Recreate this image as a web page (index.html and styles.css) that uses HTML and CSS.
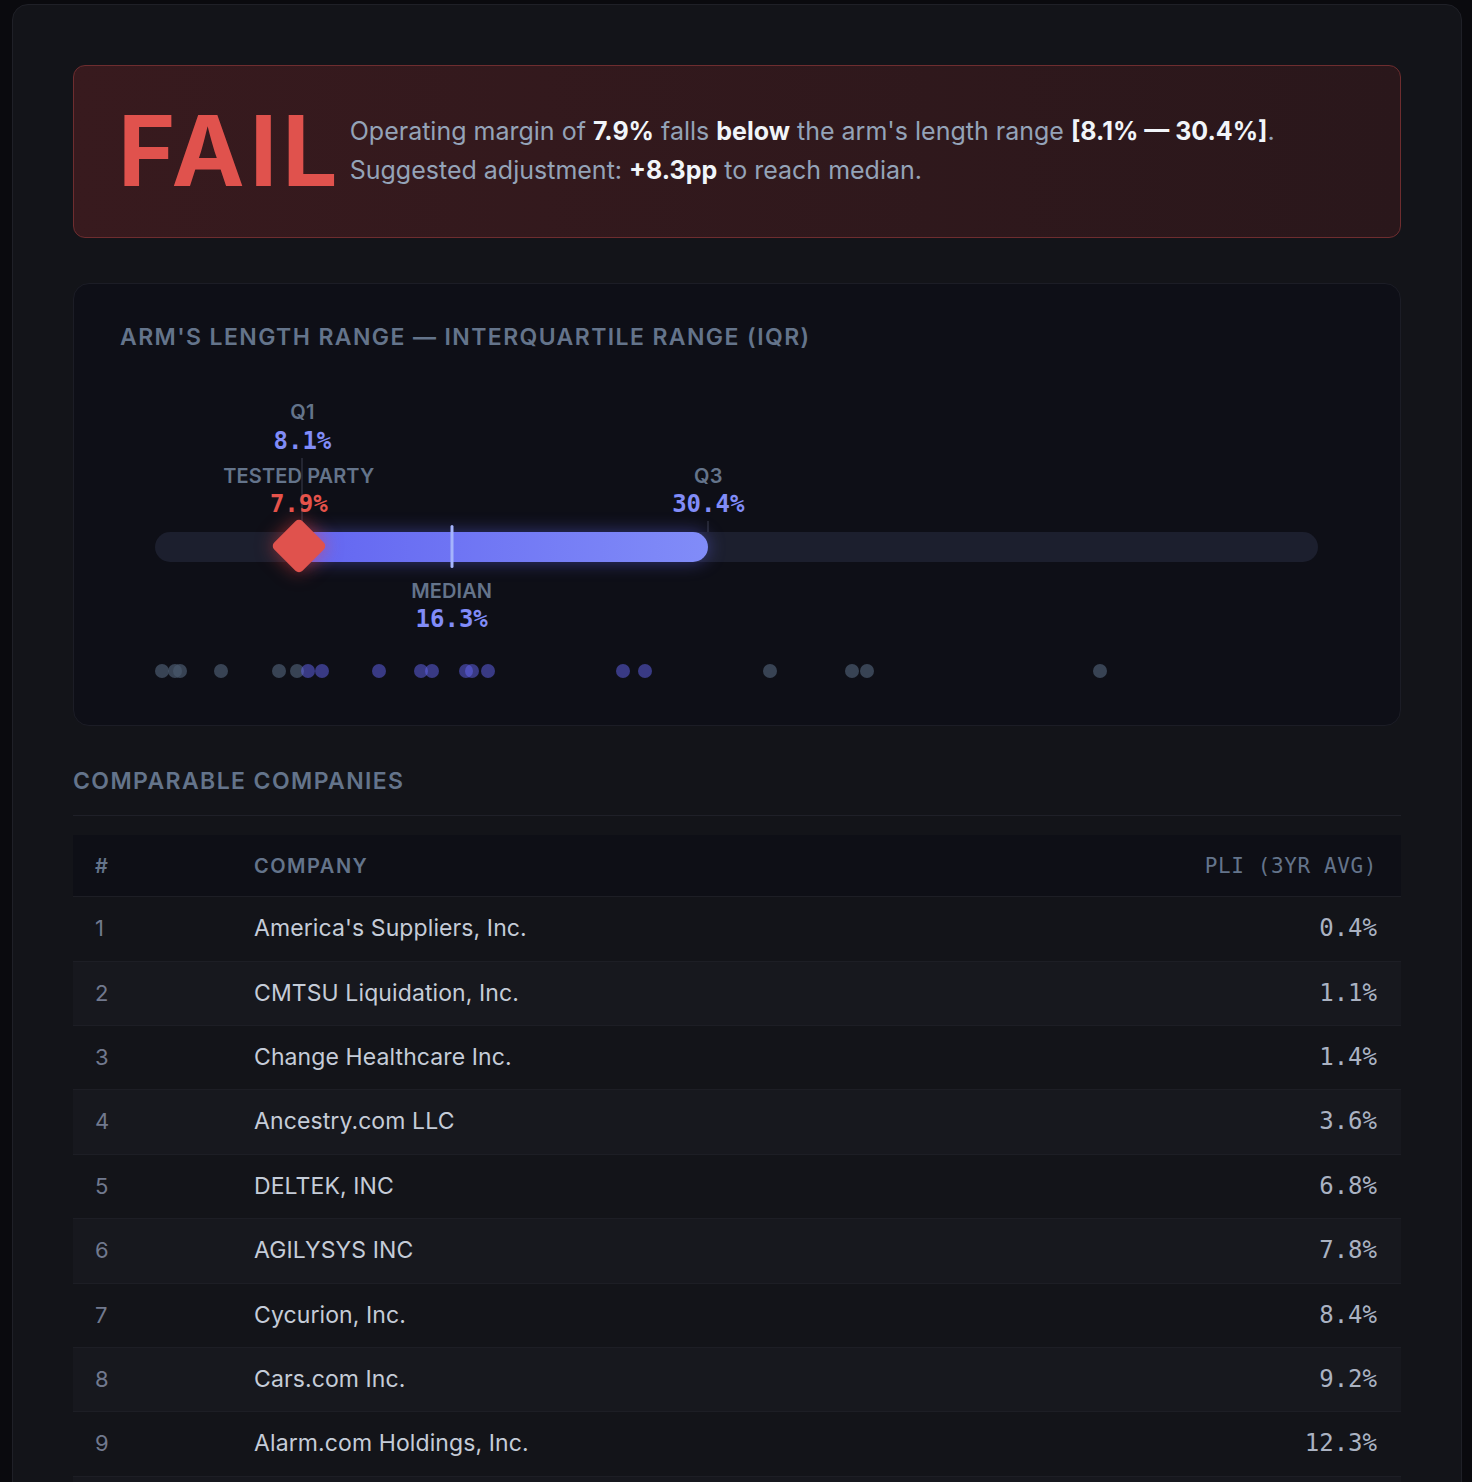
FILE: index.html
```html
<!DOCTYPE html>
<html lang="en">
<head>
<meta charset="utf-8">
<title>Arm's Length Test</title>
<link rel="stylesheet" href="styles.css">
</head>
<body>
<div class="page">
  <section class="verdict">
    <div class="verdict-word">FAIL</div>
    <p class="verdict-text">Operating margin of <strong>7.9%</strong> falls <strong>below</strong> the arm's length range <strong>[8.1% — 30.4%]</strong>.<br>Suggested adjustment: <strong>+8.3pp</strong> to reach median.</p>
  </section>

  <section class="range-card">
    <h2 class="card-title">ARM'S LENGTH RANGE — INTERQUARTILE RANGE (IQR)</h2>
    <div class="chart">
      <div class="chart-canvas">
        <div class="guide guide-q1" style="left:12.676%"></div>
        <div class="guide guide-q3" style="left:47.574%"></div>
        <div class="marker-label label-q1" style="left:12.676%">Q1</div>
        <div class="marker-value value-q1" style="left:12.676%">8.1%</div>
        <div class="marker-label label-top" style="left:12.363%">TESTED PARTY</div>
        <div class="marker-value value-tested" style="left:12.363%">7.9%</div>
        <div class="marker-label label-top" style="left:47.574%">Q3</div>
        <div class="marker-value value-q3" style="left:47.574%">30.4%</div>

        <div class="track"></div>
        <div class="iqr-fill" style="left:12.676%;width:34.898%"></div>
        <div class="median-line" style="left:25.509%"></div>
        <div class="diamond" style="left:12.363%"></div>

        <div class="marker-label label-median" style="left:25.509%">MEDIAN</div>
        <div class="marker-value value-median" style="left:25.509%">16.3%</div>

        <span class="dot" style="left:0.626%"></span>
        <span class="dot" style="left:1.721%"></span>
        <span class="dot" style="left:2.191%"></span>
        <span class="dot" style="left:5.634%"></span>
        <span class="dot" style="left:10.642%"></span>
        <span class="dot" style="left:12.207%"></span>
        <span class="dot dot-in" style="left:13.146%"></span>
        <span class="dot dot-in" style="left:14.397%"></span>
        <span class="dot dot-in" style="left:19.249%"></span>
        <span class="dot dot-in" style="left:22.848%"></span>
        <span class="dot dot-in" style="left:23.787%"></span>
        <span class="dot dot-in" style="left:26.761%"></span>
        <span class="dot dot-in" style="left:27.230%"></span>
        <span class="dot dot-in" style="left:28.638%"></span>
        <span class="dot dot-in" style="left:40.219%"></span>
        <span class="dot dot-in" style="left:42.097%"></span>
        <span class="dot" style="left:52.895%"></span>
        <span class="dot" style="left:59.937%"></span>
        <span class="dot" style="left:61.189%"></span>
        <span class="dot" style="left:81.221%"></span>
      </div>
    </div>
  </section>

  <section class="comparables">
    <h2 class="section-title">COMPARABLE COMPANIES</h2>
    <table class="comp-table">
      <thead>
        <tr>
          <th class="col-num">#</th>
          <th class="col-name">COMPANY</th>
          <th class="col-pli">PLI (3YR AVG)</th>
        </tr>
      </thead>
      <tbody>
        <tr><td class="col-num">1</td><td class="col-name">America's Suppliers, Inc.</td><td class="col-pli">0.4%</td></tr>
        <tr><td class="col-num">2</td><td class="col-name">CMTSU Liquidation, Inc.</td><td class="col-pli">1.1%</td></tr>
        <tr><td class="col-num">3</td><td class="col-name">Change Healthcare Inc.</td><td class="col-pli">1.4%</td></tr>
        <tr><td class="col-num">4</td><td class="col-name">Ancestry.com LLC</td><td class="col-pli">3.6%</td></tr>
        <tr><td class="col-num">5</td><td class="col-name">DELTEK, INC</td><td class="col-pli">6.8%</td></tr>
        <tr><td class="col-num">6</td><td class="col-name">AGILYSYS INC</td><td class="col-pli">7.8%</td></tr>
        <tr><td class="col-num">7</td><td class="col-name">Cycurion, Inc.</td><td class="col-pli">8.4%</td></tr>
        <tr><td class="col-num">8</td><td class="col-name">Cars.com Inc.</td><td class="col-pli">9.2%</td></tr>
        <tr><td class="col-num">9</td><td class="col-name">Alarm.com Holdings, Inc.</td><td class="col-pli">12.3%</td></tr>
        <tr><td class="col-num">10</td><td class="col-name">PDF Solutions, Inc.</td><td class="col-pli">14.6%</td></tr>
        <tr><td class="col-num">11</td><td class="col-name">Model N, Inc.</td><td class="col-pli">15.2%</td></tr>
        <tr><td class="col-num">12</td><td class="col-name">American Software, Inc.</td><td class="col-pli">17.1%</td></tr>
        <tr><td class="col-num">13</td><td class="col-name">QAD Inc.</td><td class="col-pli">17.4%</td></tr>
        <tr><td class="col-num">14</td><td class="col-name">Upland Software, Inc.</td><td class="col-pli">18.3%</td></tr>
        <tr><td class="col-num">15</td><td class="col-name">SPS Commerce, Inc.</td><td class="col-pli">25.7%</td></tr>
        <tr><td class="col-num">16</td><td class="col-name">Qualys, Inc.</td><td class="col-pli">26.9%</td></tr>
        <tr><td class="col-num">17</td><td class="col-name">Tyler Technologies, Inc.</td><td class="col-pli">33.8%</td></tr>
        <tr><td class="col-num">18</td><td class="col-name">Paycom Software, Inc.</td><td class="col-pli">38.3%</td></tr>
        <tr><td class="col-num">19</td><td class="col-name">Veeva Systems Inc.</td><td class="col-pli">39.1%</td></tr>
        <tr><td class="col-num">20</td><td class="col-name">Fair Isaac Corporation</td><td class="col-pli">51.9%</td></tr>
      </tbody>
    </table>
  </section>
</div>
</body>
</html>
```

FILE: styles.css
```css
* {
  box-sizing: border-box;
}

html,
body {
  margin: 0;
}

body {
  background: #0a0a0e;
  font-family: Inter, "Noto Sans", sans-serif;
  color: #c5ccd8;
}

.page {
  margin: 4px 10px 0 12px;
  padding: 60px;
  background: #131419;
  border: 1px solid #1f2027;
  border-radius: 16px;
}

/* Verdict banner */
.verdict {
  display: flex;
  align-items: center;
  gap: 7px;
  padding: 36px 44px 37px;
  border: 1px solid #6e2d2f;
  border-radius: 12px;
  background: linear-gradient(90deg, #381a1e 0%, #2a171b 100%);
}

.verdict-word {
  font-size: 98px;
  line-height: 1;
  font-weight: 700;
  color: #e0524d;
  letter-spacing: 5px;
}

.verdict-text {
  margin: 0;
  font-size: 25px;
  line-height: 39px;
  color: #94a3b8;
}

.verdict-text strong {
  color: #f1f5f9;
  font-weight: 700;
}

/* Range card */
.range-card {
  margin-top: 45px;
  padding: 40px 46px;
  background: #0e0f17;
  border: 1px solid #1c1d26;
  border-radius: 16px;
}

.card-title,
.section-title {
  margin: 0;
  font-size: 23px;
  line-height: 27.6px;
  font-weight: 600;
  letter-spacing: 1.4px;
  color: #64748b;
}

.chart {
  padding: 0 36px 0 35px;
}

.chart-canvas {
  position: relative;
  height: 333px;
}

.marker-label {
  position: absolute;
  transform: translateX(-50%);
  font-size: 20px;
  line-height: 1;
  font-weight: 600;
  letter-spacing: 0.1px;
  color: #64748b;
  white-space: nowrap;
}

.marker-value {
  position: absolute;
  transform: translateX(-50%);
  font-family: "DejaVu Sans Mono", "Liberation Mono", monospace;
  font-size: 24px;
  line-height: 1;
  font-weight: 700;
  color: #818cf8;
  white-space: nowrap;
}

.label-q1 { top: 50px; }
.value-q1 { top: 77px; }
.label-top { top: 114px; }
.value-tested { top: 140px; color: #e5534b; }
.value-q3 { top: 140px; }
.label-median { top: 229px; }
.value-median { top: 255px; }

.guide {
  position: absolute;
  width: 1px;
  background: #3a3e4e;
  transform: translateX(-50%);
}

.guide-q1 {
  top: 106px;
  height: 74px;
}

.guide-q3 {
  top: 169px;
  height: 11px;
}

.track {
  position: absolute;
  left: 0;
  right: 0;
  top: 180px;
  height: 30px;
  border-radius: 15px;
  background: #1c1f2e;
}

.iqr-fill {
  position: absolute;
  top: 180px;
  height: 30px;
  border-radius: 0 15px 15px 0;
  background: linear-gradient(90deg, #6366f1 0%, #818cf8 100%);
  box-shadow: 0 0 18px rgba(99, 102, 241, 0.45);
}

.median-line {
  position: absolute;
  top: 173px;
  width: 3px;
  height: 43px;
  border-radius: 2px;
  background: #a5b4fc;
  transform: translateX(-50%);
}

.diamond {
  position: absolute;
  top: 174px;
  width: 40px;
  height: 40px;
  margin-left: -20px;
  border-radius: 5px;
  background: #e0524d;
  transform: rotate(45deg);
  box-shadow: 0 0 18px rgba(239, 68, 68, 0.55);
}

.dot {
  position: absolute;
  top: 312px;
  width: 14px;
  height: 14px;
  margin-left: -7px;
  border-radius: 50%;
  background: rgba(71, 85, 105, 0.75);
}

.dot-in {
  background: rgba(99, 102, 241, 0.5);
}

/* Comparables */
.comparables {
  margin-top: 42px;
}

.section-title {
  padding-bottom: 20px;
  border-bottom: 1px solid #1f2028;
  margin-bottom: 19px;
}

.comp-table {
  width: 100%;
  border-collapse: separate;
  border-spacing: 0;
  table-layout: fixed;
}

.comp-table th {
  padding: 19px 24px 18px;
  background: #0e0f16;
  border-bottom: 1px solid #1d1e25;
  font-size: 20px;
  line-height: 24px;
  font-weight: 600;
  letter-spacing: 1.5px;
  color: #64748b;
  text-align: left;
}

.comp-table td {
  padding: 18px 24px 18px;
  border-bottom: 1px solid #1d1e25;
  font-size: 23px;
  line-height: 27.4px;
  vertical-align: middle;
}

.comp-table tbody tr:nth-child(even) td {
  background: #17181e;
}

.comp-table .col-num {
  width: 181px;
  padding-left: 22px;
  padding-right: 0;
}

.comp-table td.col-num {
  font-size: 22px;
  color: #71798e;
}

.comp-table td.col-name {
  padding-left: 0;
  letter-spacing: 0.1px;
  color: #c5ccd8;
}

.comp-table th.col-name {
  padding-left: 0;
}

.comp-table .col-pli {
  width: 320px;
  text-align: right;
  font-family: "DejaVu Sans Mono", "Liberation Mono", monospace;
}

.comp-table th.col-pli {
  font-size: 21px;
  font-weight: 400;
  letter-spacing: 0.6px;
  padding-right: 24px;
}

.comp-table td.col-pli {
  font-size: 24px;
  color: #aab2c2;
}
```
